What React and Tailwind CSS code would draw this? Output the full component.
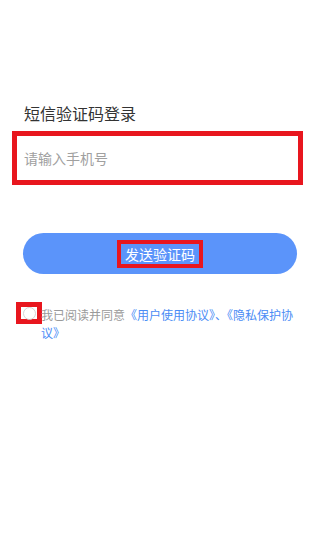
export default function App() {
  return (
    <div
      className="min-h-[555px] bg-white pt-[101px]"
      style={{ fontFamily: '"Noto Sans CJK SC", "Noto Sans", sans-serif' }}
    >
      <h1 className="px-6 text-[16px] font-normal leading-6 text-[#333]">短信验证码登录</h1>

      <div className="mt-[6px] ml-3 flex h-[54px] w-[291px] items-center border-[5px] border-[#e8161e] pl-[7px] text-[14px] text-[#a0a0a0]">
        请输入手机号
      </div>

      <div className="mx-[23px] mt-[48px] flex h-[41px] items-center justify-center rounded-full bg-[#5b94fa]">
        <span className="border-4 border-[#e8161e] px-1 text-[14px] leading-5 text-white">
          发送验证码
        </span>
      </div>

      <div className="mt-[28px] flex items-start pr-6">
        <div className="ml-4 flex h-[22px] w-[26px] shrink-0 items-center justify-center border-[5px] border-[#e8161e]">
          <div className="h-[13px] w-[13px] rounded-full border border-[#d4d4d4]" />
        </div>
        <p className="mt-[4px] -ml-[1px] text-[12px] leading-[18px] text-[#9a9a9a]">
          我已阅读并同意<span className="text-[#4a8cf5]">《用户使用协议》、《隐私保护协议》</span>
        </p>
      </div>
    </div>
  );
}
